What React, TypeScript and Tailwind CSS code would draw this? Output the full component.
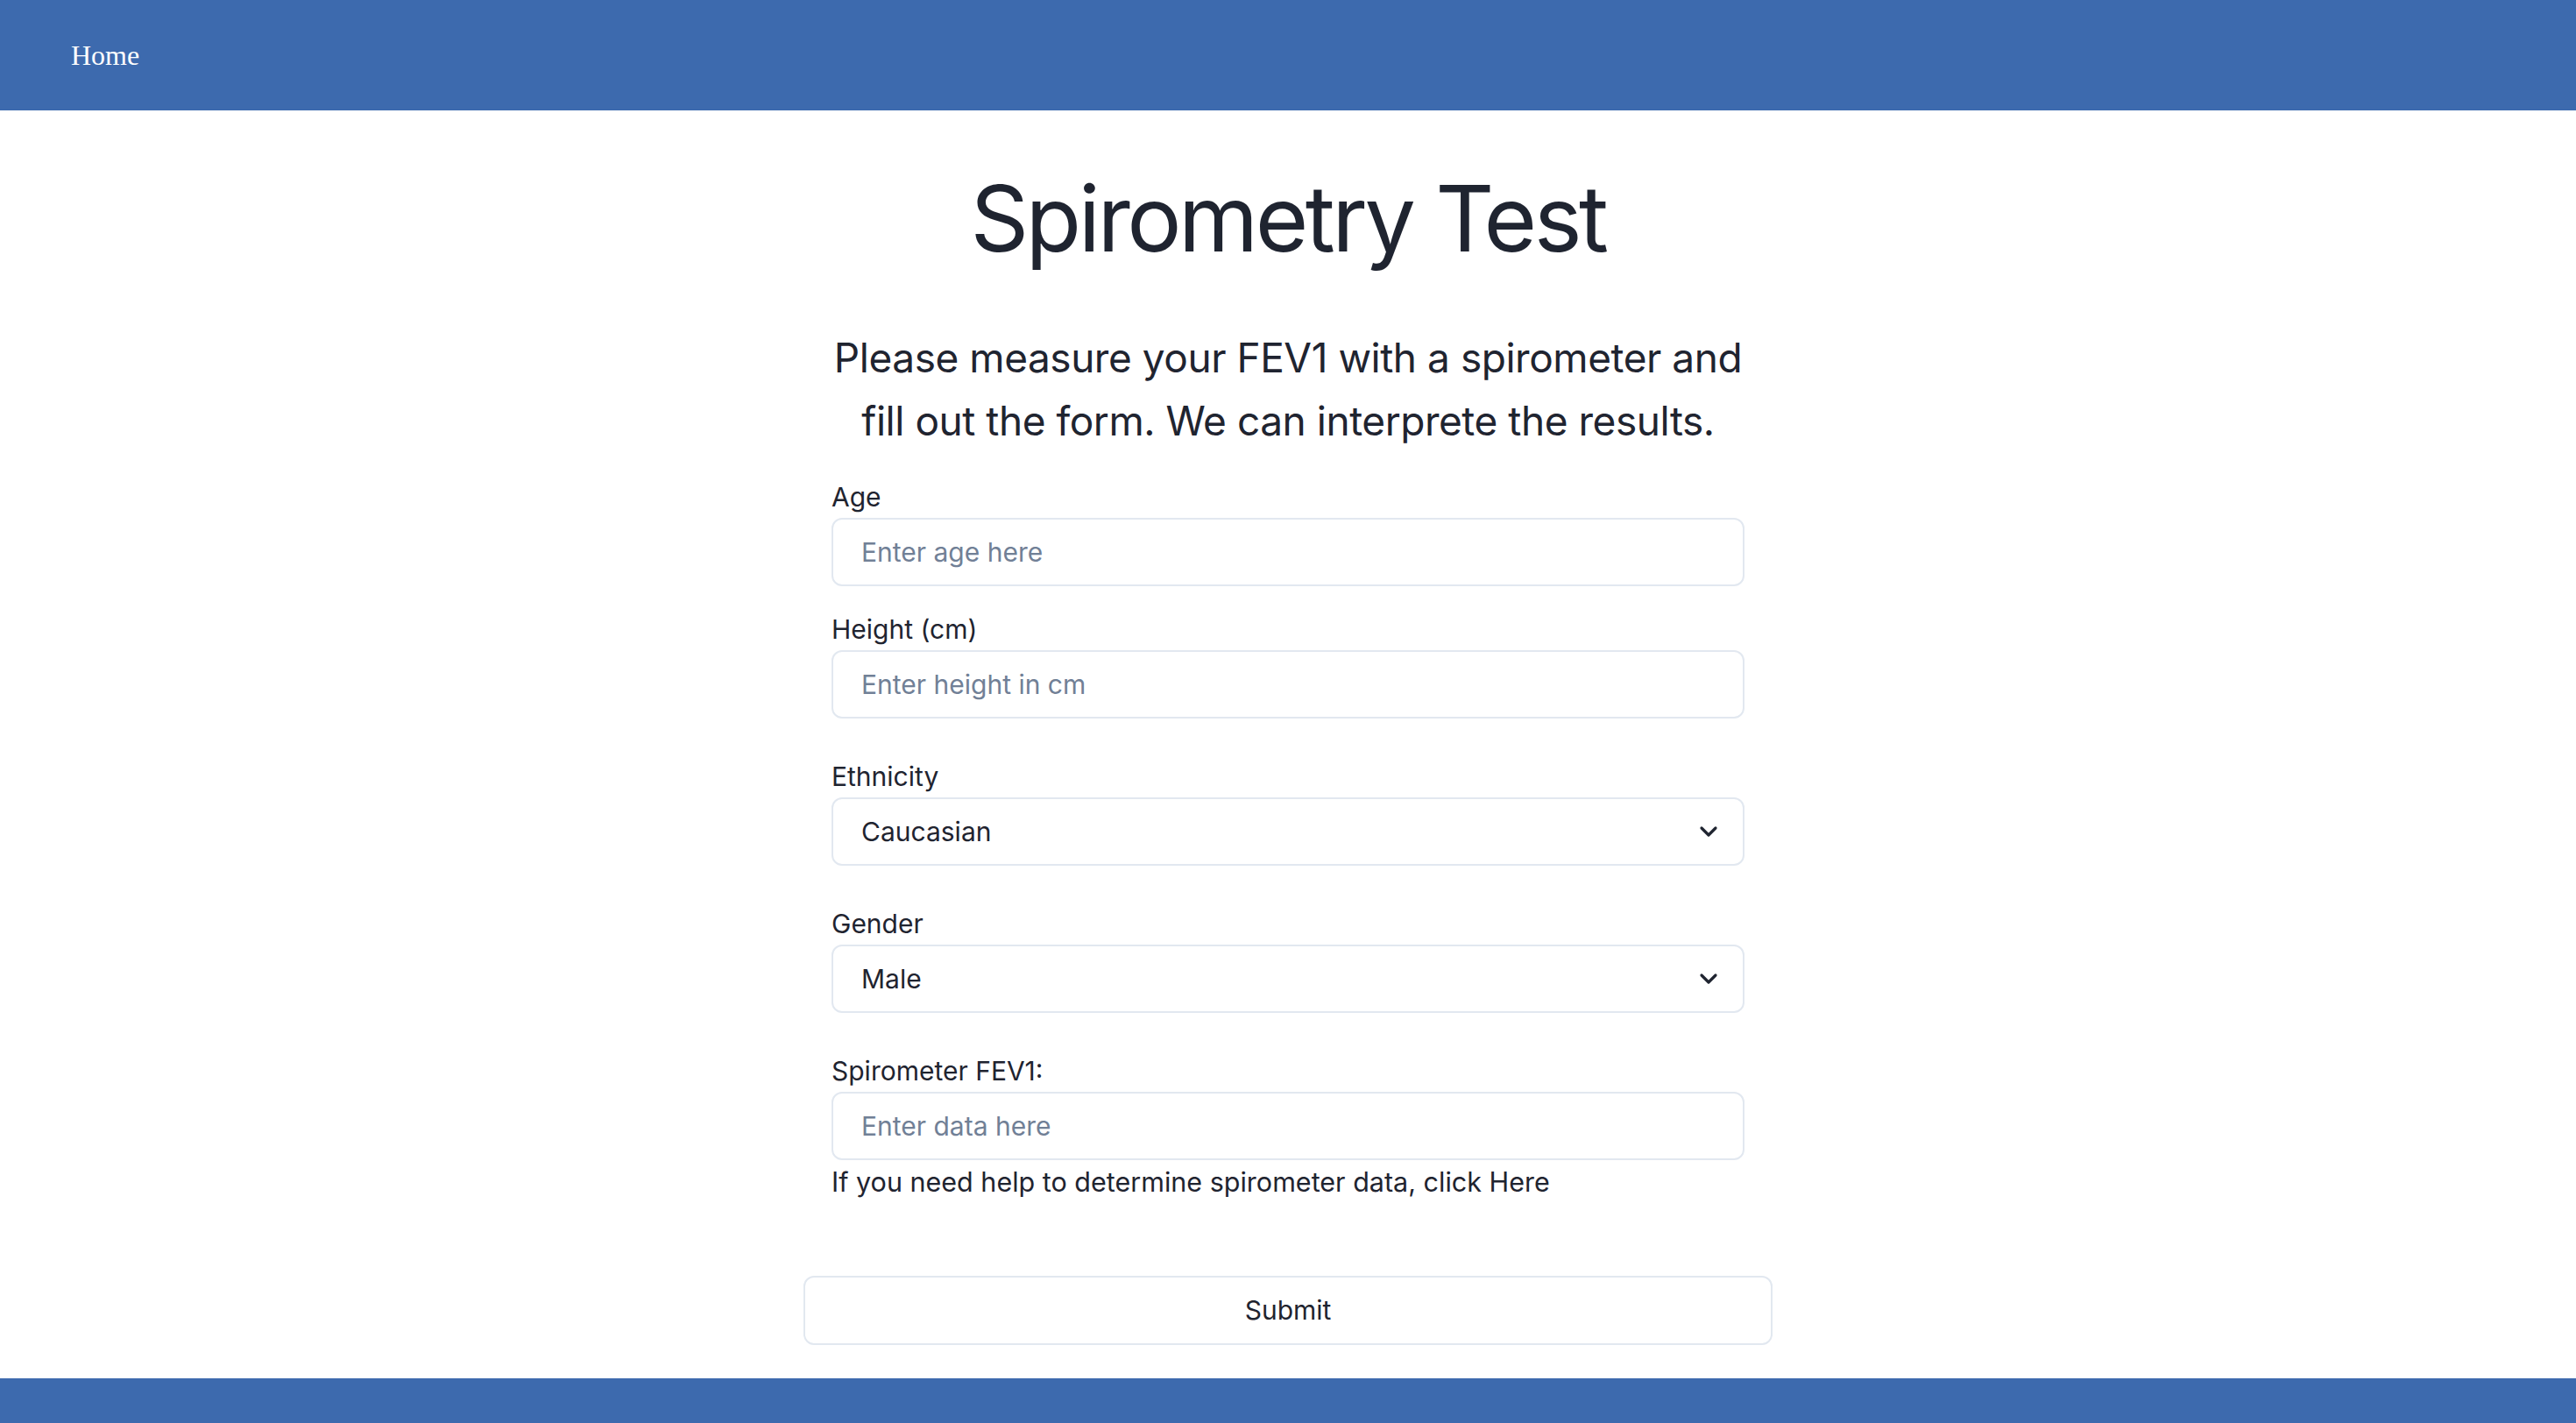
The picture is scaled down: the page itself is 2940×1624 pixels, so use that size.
import React, { useState } from 'react';

const fieldClass =
  'block w-full h-[78px] rounded-[12px] border-2 border-[#e2e8f0] bg-white px-[32px] text-[30px] text-[#1f2430] placeholder:text-[#718096] outline-none';

function Label({ children }: { children: React.ReactNode }) {
  return <label className="block text-[30px] leading-[38px] text-[#1f2430] mb-[5px]">{children}</label>;
}

function Chevron() {
  return (
    <svg
      className="pointer-events-none absolute right-[30px] top-1/2 -translate-y-1/2"
      width="22"
      height="14"
      viewBox="0 0 22 14"
      fill="none"
    >
      <path d="M3 3l8 8 8-8" stroke="#1f2430" strokeWidth="3.2" strokeLinecap="round" strokeLinejoin="round" />
    </svg>
  );
}

function SelectField({ value, options, onChange }: { value: string; options: string[]; onChange: (v: string) => void }) {
  return (
    <div className="relative">
      <select
        value={value}
        onChange={(e) => onChange(e.target.value)}
        className={fieldClass + ' appearance-none cursor-pointer'}
      >
        {options.map((o) => (
          <option key={o}>{o}</option>
        ))}
      </select>
      <Chevron />
    </div>
  );
}

export default function App() {
  const [ethnicity, setEthnicity] = useState('Caucasian');
  const [gender, setGender] = useState('Male');

  return (
    <div className="min-h-screen flex flex-col bg-white font-['Inter',sans-serif]">
      {/* nav */}
      <header className="h-[126px] bg-[#3d6aae] flex items-center pl-[81px]">
        <a href="#" className="text-white text-[32px] font-['Liberation_Serif','Times_New_Roman',serif]">
          Home
        </a>
      </header>

      <main className="flex flex-col items-center">
        <h1 className="mt-[70px] text-[104px] leading-[106px] tracking-[-0.034em] text-[#1f2430]">Spirometry Test</h1>
        <p className="mt-[70px] text-center text-[46px] leading-[72px] tracking-[-0.01em] text-[#1f2430]">
          Please measure your FEV1 with a spirometer and
          <br />
          fill out the form. We can interprete the results.
        </p>

        <form className="w-[1042px] mt-[32px]" onSubmit={(e) => e.preventDefault()}>
          <Label>Age</Label>
          <input className={fieldClass} placeholder="Enter age here" />

          <div className="mt-[30px]">
            <Label>Height (cm)</Label>
            <input className={fieldClass} placeholder="Enter height in cm" />
          </div>

          <div className="mt-[47px]">
            <Label>Ethnicity</Label>
            <SelectField
              value={ethnicity}
              onChange={setEthnicity}
              options={['Caucasian', 'African American', 'Asian', 'Hispanic', 'Other']}
            />
          </div>

          <div className="mt-[47px]">
            <Label>Gender</Label>
            <SelectField value={gender} onChange={setGender} options={['Male', 'Female']} />
          </div>

          <div className="mt-[47px]">
            <Label>Spirometer FEV1:</Label>
            <input className={fieldClass} placeholder="Enter data here" />
            <p className="mt-[6px] text-[30.5px] leading-[38px] text-[#1f2430]">
              If you need help to determine spirometer data, click <a href="#">Here</a>
            </p>
          </div>

          <button
            type="submit"
            className="mt-[88px] -mx-[32px] w-[1106px] h-[79px] rounded-[12px] border-2 border-[#e2e8f0] bg-white text-[30px] text-[#1f2430]"
          >
            Submit
          </button>
        </form>
      </main>

      <footer className="mt-auto h-[51px] bg-[#3d6aae]" />
    </div>
  );
}
